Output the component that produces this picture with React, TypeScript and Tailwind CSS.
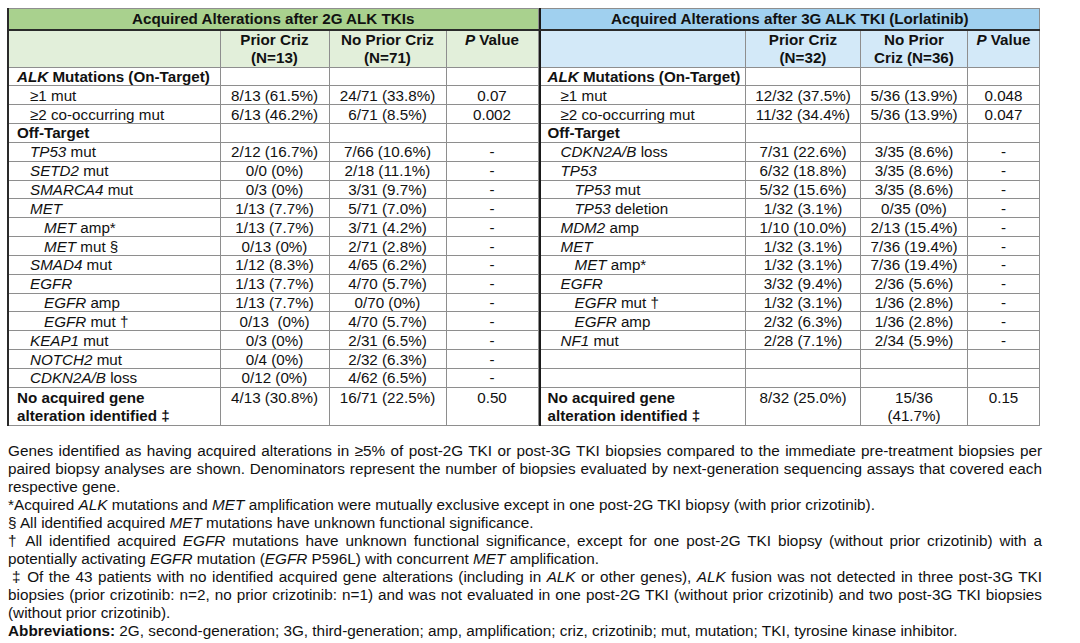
import type { ReactNode } from "react";

interface Row {
  label: ReactNode;
  indent: 0 | 1 | 2;
  bold?: boolean;
  a?: ReactNode;
  b?: ReactNode;
  p?: string;
}

const alkHead: Row = {
  label: (
    <>
      <i>ALK</i> Mutations (On-Target)
    </>
  ),
  indent: 0,
  bold: true,
};

const offTarget: Row = { label: "Off-Target", indent: 0, bold: true };

const leftRows: Row[] = [
  alkHead,
  { label: "≥1 mut", indent: 1, a: "8/13 (61.5%)", b: "24/71 (33.8%)", p: "0.07" },
  { label: "≥2 co-occurring mut", indent: 1, a: "6/13 (46.2%)", b: "6/71 (8.5%)", p: "0.002" },
  offTarget,
  { label: <><i>TP53</i> mut</>, indent: 1, a: "2/12 (16.7%)", b: "7/66 (10.6%)", p: "-" },
  { label: <><i>SETD2</i> mut</>, indent: 1, a: "0/0 (0%)", b: "2/18 (11.1%)", p: "-" },
  { label: <><i>SMARCA4</i> mut</>, indent: 1, a: "0/3 (0%)", b: "3/31 (9.7%)", p: "-" },
  { label: <i>MET</i>, indent: 1, a: "1/13 (7.7%)", b: "5/71 (7.0%)", p: "-" },
  { label: <><i>MET</i> amp*</>, indent: 2, a: "1/13 (7.7%)", b: "3/71 (4.2%)", p: "-" },
  { label: <><i>MET</i> mut §</>, indent: 2, a: "0/13 (0%)", b: "2/71 (2.8%)", p: "-" },
  { label: <><i>SMAD4</i> mut</>, indent: 1, a: "1/12 (8.3%)", b: "4/65 (6.2%)", p: "-" },
  { label: <i>EGFR</i>, indent: 1, a: "1/13 (7.7%)", b: "4/70 (5.7%)", p: "-" },
  { label: <><i>EGFR</i> amp</>, indent: 2, a: "1/13 (7.7%)", b: "0/70 (0%)", p: "-" },
  { label: <><i>EGFR</i> mut †</>, indent: 2, a: "0/13\u00a0 (0%)", b: "4/70 (5.7%)", p: "-" },
  { label: <><i>KEAP1</i> mut</>, indent: 1, a: "0/3 (0%)", b: "2/31 (6.5%)", p: "-" },
  { label: <><i>NOTCH2</i> mut</>, indent: 1, a: "0/4 (0%)", b: "2/32 (6.3%)", p: "-" },
  { label: <><i>CDKN2A/B</i> loss</>, indent: 1, a: "0/12 (0%)", b: "4/62 (6.5%)", p: "-" },
];

const rightRows: Row[] = [
  alkHead,
  { label: "≥1 mut", indent: 1, a: "12/32 (37.5%)", b: "5/36 (13.9%)", p: "0.048" },
  { label: "≥2 co-occurring mut", indent: 1, a: "11/32 (34.4%)", b: "5/36 (13.9%)", p: "0.047" },
  offTarget,
  { label: <><i>CDKN2A/B</i> loss</>, indent: 1, a: "7/31 (22.6%)", b: "3/35 (8.6%)", p: "-" },
  { label: <i>TP53</i>, indent: 1, a: "6/32 (18.8%)", b: "3/35 (8.6%)", p: "-" },
  { label: <><i>TP53</i> mut</>, indent: 2, a: "5/32 (15.6%)", b: "3/35 (8.6%)", p: "-" },
  { label: <><i>TP53</i> deletion</>, indent: 2, a: "1/32 (3.1%)", b: "0/35 (0%)", p: "-" },
  { label: <><i>MDM2</i> amp</>, indent: 1, a: "1/10 (10.0%)", b: "2/13 (15.4%)", p: "-" },
  { label: <i>MET</i>, indent: 1, a: "1/32 (3.1%)", b: "7/36 (19.4%)", p: "-" },
  { label: <><i>MET</i> amp*</>, indent: 2, a: "1/32 (3.1%)", b: "7/36 (19.4%)", p: "-" },
  { label: <i>EGFR</i>, indent: 1, a: "3/32 (9.4%)", b: "2/36 (5.6%)", p: "-" },
  { label: <><i>EGFR</i> mut †</>, indent: 2, a: "1/32 (3.1%)", b: "1/36 (2.8%)", p: "-" },
  { label: <><i>EGFR</i> amp</>, indent: 2, a: "2/32 (6.3%)", b: "1/36 (2.8%)", p: "-" },
  { label: <><i>NF1</i> mut</>, indent: 1, a: "2/28 (7.1%)", b: "2/34 (5.9%)", p: "-" },
  { label: "", indent: 0 },
  { label: "", indent: 0 },
];

const cell = "border border-[#8e8e8e] p-0";

function SideTable({
  title,
  cols,
  titleBg,
  headBg,
  headA,
  headB,
  rows,
  last,
  indents,
  edge,
}: {
  title: string;
  cols: string[];
  titleBg: string;
  headBg: string;
  headA: ReactNode;
  headB: ReactNode;
  rows: Row[];
  last: { a: ReactNode; b: ReactNode; p: string };
  indents: string[];
  edge: string;
}) {
  return (
    <table className={`table-fixed border-collapse ${edge}`}>
      <colgroup>
        {cols.map((c, i) => (
          <col key={i} className={c} />
        ))}
      </colgroup>
      <tbody>
        <tr className={`h-[21px] ${titleBg}`}>
          <td colSpan={4} className={`${cell} border-b-2 border-b-[#2a2a2a] text-center font-bold`}>
            {title}
          </td>
        </tr>
        <tr className={`h-[34px] ${headBg} align-top font-bold`}>
          <td className={cell}></td>
          <td className={`${cell} text-center`}>{headA}</td>
          <td className={`${cell} text-center`}>{headB}</td>
          <td className={`${cell} text-center`}>
            <i>P</i> Value
          </td>
        </tr>
        {rows.map((r, i) => (
          <tr key={i} className="h-[18.85px] leading-[17px]">
            <td className={`${cell} ${indents[r.indent]} whitespace-nowrap ${r.bold ? "font-bold" : ""}`}>
              {r.label}
            </td>
            <td className={`${cell} text-center whitespace-pre`}>{r.a}</td>
            <td className={`${cell} text-center`}>{r.b}</td>
            <td className={`${cell} text-center`}>{r.p}</td>
          </tr>
        ))}
        <tr className="h-[36px] align-top">
          <td className={`${cell} ${indents[0]} pt-[1px] font-bold`}>
            No acquired gene
            <br />
            alteration identified ‡
          </td>
          <td className={`${cell} pt-[1px] text-center`}>{last.a}</td>
          <td className={`${cell} pt-[1px] text-center`}>{last.b}</td>
          <td className={`${cell} pt-[1px] text-center`}>{last.p}</td>
        </tr>
      </tbody>
    </table>
  );
}

// each printed line of the notes is its own block so breaks match the source
function Line({ children, full }: { children: ReactNode; full?: boolean }) {
  return (
    <div className={full ? "text-justify [text-align-last:justify]" : "whitespace-nowrap"}>{children}</div>
  );
}

export default function App() {
  return (
    <div className="min-h-[643px] w-[1080px] bg-white pl-[7px] pt-[8px] font-['Liberation_Sans',Arial,sans-serif] text-[15.2px] leading-[18px] text-[#111]">
      <div className="flex">
        <SideTable
          title="Acquired Alterations after 2G ALK TKIs"
          cols={["w-[212px]", "w-[109px]", "w-[117px]", "w-[92px]"]}
          titleBg="bg-[#a9d18e]"
          headBg="bg-[#e2efda]"
          headA={<>Prior Criz<br />(N=13)</>}
          headB={<>No Prior Criz<br />(N=71)</>}
          rows={leftRows}
          last={{ a: "4/13 (30.8%)", b: "16/71 (22.5%)", p: "0.50" }}
          indents={["pl-[8px]", "pl-[21px]", "pl-[35px]"]}
          edge="border-l-2 border-l-[#2a2a2a]"
        />
        <SideTable
          title="Acquired Alterations after 3G ALK TKI (Lorlatinib)"
          cols={["w-[206px]", "w-[115px]", "w-[107px]", "w-[72px]"]}
          titleBg="bg-[#a0d0ef]"
          headBg="bg-[#d3e9f8]"
          headA={<>Prior Criz<br />(N=32)</>}
          headB={<>No Prior<br />Criz (N=36)</>}
          rows={rightRows}
          last={{ a: "8/32 (25.0%)", b: <>15/36<br />(41.7%)</>, p: "0.15" }}
          indents={["pl-[7px]", "pl-[20px]", "pl-[34px]"]}
          edge="border-l-2 border-l-[#1a1a1a]"
        />
      </div>

      <div className="mt-[16px] w-[1035px] pl-[1px] text-[15.3px]">
        <Line full>
          Genes identified as having acquired alterations in ≥5% of post-2G TKI or post-3G TKI biopsies compared to the
          immediate pre-treatment biopsies per
        </Line>
        <Line full>
          paired biopsy analyses are shown. Denominators represent the number of biopsies evaluated by next-generation
          sequencing assays that covered each
        </Line>
        <Line>respective gene.</Line>
        <Line>
          *Acquired <i>ALK</i> mutations and <i>MET</i> amplification were mutually exclusive except in one post-2G TKI
          biopsy (with prior crizotinib).
        </Line>
        <Line>
          § All identified acquired <i>MET</i> mutations have unknown functional significance.
        </Line>
        <Line full>
          † All identified acquired <i>EGFR</i> mutations have unknown functional significance, except for one post-2G TKI
          biopsy (without prior crizotinib) with a
        </Line>
        <Line>
          potentially activating <i>EGFR</i> mutation (<i>EGFR</i> P596L) with concurrent <i>MET</i> amplification.
        </Line>
        <Line full>
          <span className="pl-[4px]">‡</span> Of the 43 patients with no identified acquired gene alterations (including in{" "}
          <i>ALK</i> or other genes), <i>ALK</i> fusion was not detected in three post-3G TKI
        </Line>
        <Line full>
          biopsies (prior crizotinib: n=2, no prior crizotinib: n=1) and was not evaluated in one post-2G TKI (without
          prior crizotinib) and two post-3G TKI biopsies
        </Line>
        <Line>(without prior crizotinib).</Line>
        <Line>
          <b>Abbreviations:</b> 2G, second-generation; 3G, third-generation; amp, amplification; criz, crizotinib; mut,
          mutation; TKI, tyrosine kinase inhibitor.
        </Line>
      </div>
    </div>
  );
}
